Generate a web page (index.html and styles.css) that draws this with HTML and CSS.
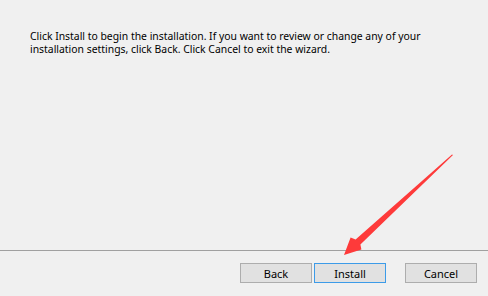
FILE: index.html
```html
<!DOCTYPE html>
<html lang="en">
<head>
  <meta charset="UTF-8">
  <title>Ready to Install</title>
  <link rel="stylesheet" href="styles.css">
</head>
<body>
  <div class="wizard">
    <div class="content">
      <p class="message">
        Click Install to begin the installation. If you want to review or change any of your<br>
        installation settings, click Back. Click Cancel to exit the wizard.
      </p>
    </div>
    <div class="footer">
      <button class="btn">Back</button>
      <button class="btn btn-default">Install</button>
      <button class="btn btn-cancel">Cancel</button>
    </div>
  </div>

  <svg class="arrow" width="488" height="296" viewBox="0 0 488 296">
    <polygon points="453,155 360.4,244.6 361.4,249.4 344,255 350.6,237.6 355.6,239.4 452,154.5" fill="#fe3a3a"/>
  </svg>
</body>
</html>
```

FILE: styles.css
```css
* {
  margin: 0;
  padding: 0;
  box-sizing: border-box;
}

body {
  font-family: 'Noto Sans', 'DejaVu Sans', sans-serif;
  background: #f0f0f0;
  color: #000;
  width: 488px;
  height: 296px;
  overflow: hidden;
  position: relative;
}

.wizard {
  display: flex;
  flex-direction: column;
  height: 296px;
}

.content {
  height: 250px;
  padding: 30px 0 0 30px;
}

.message {
  font-size: 10.4px;
  line-height: 13px;
}

.footer {
  flex: 1;
  border-top: 1px solid #a0a0a0;
  display: flex;
  justify-content: flex-end;
  align-items: flex-start;
  padding: 12px 11px 0 0;
  gap: 2px;
}

.btn {
  width: 72px;
  height: 20px;
  background: #e1e1e1;
  border: 1px solid #adadad;
  font-family: 'Noto Sans', 'DejaVu Sans', sans-serif;
  font-size: 11px;
  color: #000;
}

.btn-default {
  border-color: #3c9be8;
}

.btn-cancel {
  margin-left: 17px;
}

.arrow {
  position: absolute;
  top: 0;
  left: 0;
  pointer-events: none;
}
```
